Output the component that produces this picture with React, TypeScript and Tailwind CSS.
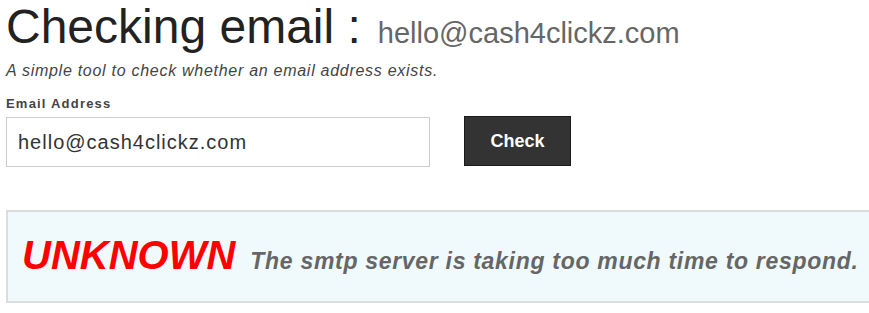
import React from 'react';

const font = { fontFamily: '"Liberation Sans", Arial, sans-serif' };

export default function App() {
  const email = 'hello@cash4clickz.com';

  return (
    <div className="w-[869px] h-[313px] overflow-hidden bg-white" style={font}>
      <div className="px-[6px]">
        {/* Heading */}
        <h1 className="mt-[3px] flex h-[48px] items-baseline whitespace-nowrap font-normal">
          <span className="text-[48px] leading-[48px] text-[#222]">Checking email :</span>
          <span className="ml-[17px] text-[29px] leading-[29px] text-[#666]">{email}</span>
        </h1>
        <p className="mt-[10px] h-[20px] text-[16px] leading-[20px] italic tracking-[0.72px] text-[#444]">
          A simple tool to check whether an email address exists.
        </p>

        {/* Form */}
        <label className="block mt-[15px] h-[16px] text-[13px] leading-[16px] font-bold tracking-[1.2px] text-[#444]">
          Email Address
        </label>
        <div className="mt-[4px] flex h-[51px] items-start">
          <input
            type="text"
            defaultValue={email}
            className="mt-[1px] block h-[50px] w-[424px] border border-[#ccc] pl-[11px] text-[20px] tracking-[1px] text-[#333] outline-none"
            style={font}
          />
          <button
            className="ml-[34px] block h-[50px] w-[107px] border border-[#1a1a1a] bg-[#333] text-[18px] font-bold text-white"
            style={font}
          >
            Check
          </button>
        </div>
      </div>

      {/* Result */}
      <div className="ml-[6px] mt-[43px] flex h-[93px] w-[900px] items-center border-2 border-[#dcdcdc] bg-[#f0fafd] pl-[14px]">
        <div className="flex items-baseline gap-[15px] whitespace-nowrap">
          <span className="text-[40px] leading-[41px] font-bold italic text-[#f00]">UNKNOWN</span>
          <span className="text-[23px] font-bold italic tracking-[0.7px] text-[#666]">
            The smtp server is taking too much time to respond.
          </span>
        </div>
      </div>
    </div>
  );
}
